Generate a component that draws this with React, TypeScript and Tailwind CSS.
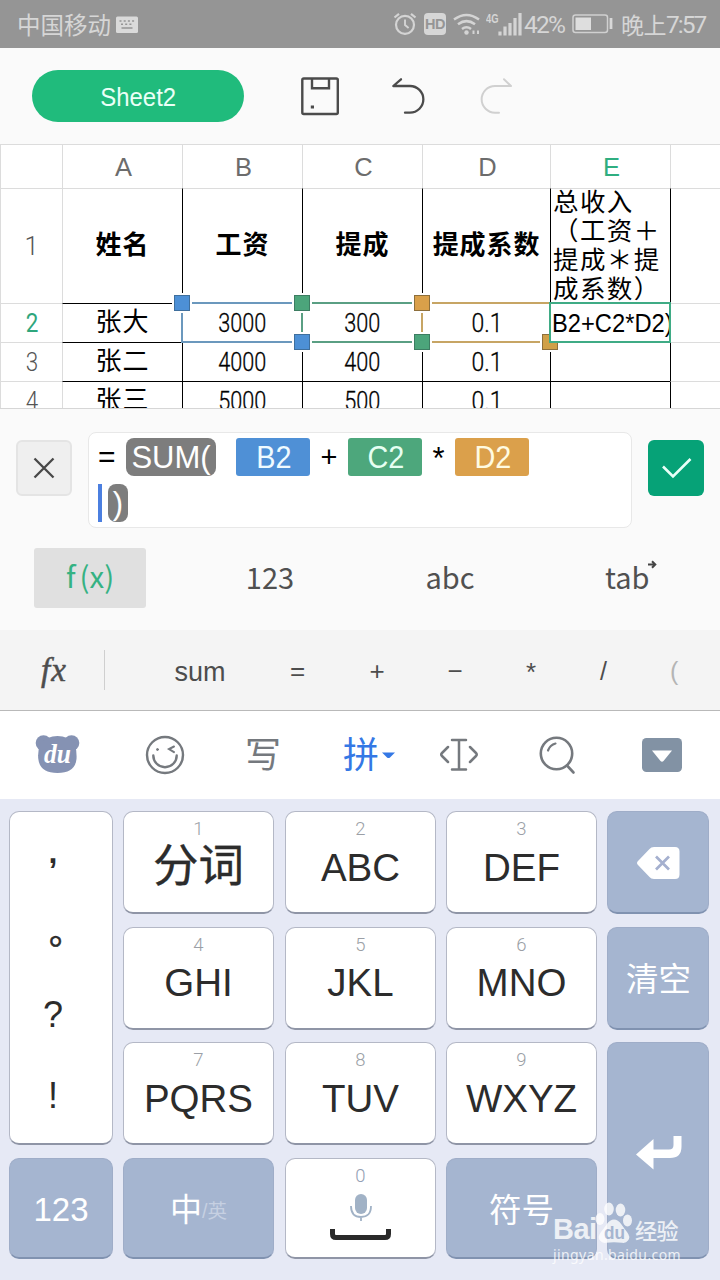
import React from "react";

const SANS = "font-['Liberation_Sans','Noto_Sans_CJK_SC',sans-serif]";
const CJK = "font-['Noto_Sans_CJK_SC',sans-serif]";
const THIN = "font-['Roboto','Liberation_Sans',sans-serif] font-light";

function StatusBar() {
  return (
    <div className="flex h-12 items-center bg-[#959595] pl-[17px] text-[#d6d6d6]">
      <span className={`${CJK} w-[98px] whitespace-nowrap text-[23.5px] leading-[48px]`}>中国移动</span>
      <svg className="mt-[2px]" width="24" height="18" viewBox="0 0 24 18">
        <rect x="1" y="0.5" width="22" height="16.5" rx="1.5" fill="#dadada" />
        <path d="M4.5 5h15M6 8.3h12" stroke="#959595" strokeWidth="1.6" strokeDasharray="2 2.2" />
        <path d="M6.5 12h11" stroke="#959595" strokeWidth="1.5" />
      </svg>
      <svg className="ml-[254px]" width="24" height="24" viewBox="0 0 24 24" fill="none" stroke="#d4d4d4" strokeWidth="2.2">
        <circle cx="12" cy="12.8" r="9" />
        <path d="M12 7.5v5.6l3.6 3" strokeWidth="1.9" />
        <path d="M1.5 5.5 6 1.8M22.5 5.5 18 1.8" />
      </svg>
      <span className="ml-[7px] flex h-[22px] w-[22px] items-center justify-center rounded-[4px] bg-[#d6d6d6] font-['Liberation_Sans',sans-serif] text-[14.5px] leading-none font-bold tracking-[-0.5px] text-[#959595]">
        HD
      </span>
      <svg className="ml-[7px]" width="28" height="24" viewBox="0 0 28 24" fill="none" stroke="#d4d4d4" strokeWidth="2.5">
        <path d="M1 7.500q12.500-9 25 0M5 12.300q8.500-6.300 17 0M9 17q4.500-3.600 9 0" />
        <circle cx="13.500" cy="20.500" r="2.200" fill="#d4d4d4" stroke="none" />
        <path d="M20.500 18.500v3.500M25 18.500v3.500" strokeWidth="2" />
      </svg>
      <svg className="ml-[5px]" width="38" height="26" viewBox="0 0 38 26">
        <text x="0" y="12" fill="#d6d6d6" fontSize="12.500" fontWeight="700" textLength="12.500" lengthAdjust="spacingAndGlyphs" fontFamily="Liberation Sans">4G</text>
        <path d="M14 24.500v-4M19 24.500v-9M24 24.500V12M29 24.500V7M34 24.500V2" stroke="#d4d4d4" strokeWidth="3.200" />
      </svg>
      <span className={`${THIN} w-[46px] pt-[3px] text-[24.5px] leading-none font-normal tracking-[-1.8px] whitespace-nowrap`}>42%</span>
      <svg className="ml-[2px]" width="41" height="20" viewBox="0 0 41 20">
        <rect x="1" y="1" width="34.500" height="17.500" rx="2.500" fill="none" stroke="#d0d0d0" strokeWidth="1.500" />
        <rect x="3.500" y="3.500" width="15.500" height="12.500" fill="#dedede" />
        <path d="M39 4v11" stroke="#d8d8d8" strokeWidth="2.800" />
      </svg>
      <span className="ml-[8px] flex items-center text-[23px] leading-none whitespace-nowrap">
        <span className={`${CJK} tracking-[-0.5px]`}>晚上</span>
        <span className={`${THIN} pt-[3px] text-[24.5px] font-normal tracking-[-2px]`}>7:57</span>
      </span>
    </div>
  );
}

function Toolbar() {
  return (
    <div className="flex h-24 items-center bg-[#fafafa] pl-8">
      <button className={`${SANS} flex h-[52px] w-[212px] items-center justify-center rounded-full bg-[#20bb7c] pt-[2px] text-[26px] leading-none text-[#eafff6]`}>
        <span className="scale-x-[0.92]">Sheet2</span>
      </button>
      <svg className="ml-[56px]" width="40" height="40" viewBox="0 0 40 40" fill="none" stroke="#4b4b4b" strokeWidth="2.400">
        <rect x="2.300" y="2.500" width="35.500" height="35.500" rx="1.500" />
        <path d="M12 2.500v9.800h17V2.500" />
        <rect x="10.800" y="29.500" width="3.200" height="3" fill="#4b4b4b" stroke="none" />
      </svg>
      <svg className="ml-[50px]" width="38" height="40" viewBox="0 0 38 40" fill="none" stroke="#4b4b4b" strokeWidth="2.300" strokeLinecap="round" strokeLinejoin="round">
        <path d="M11 3.300 3.300 10H20a13.300 13.300 0 0 1 0 26.700h-5" />
      </svg>
      <svg className="ml-[50px]" width="38" height="40" viewBox="0 0 38 40" fill="none" stroke="#d0d0d0" strokeWidth="2" strokeLinecap="round" strokeLinejoin="round">
        <path d="M26 3.300 33 10H17a13.300 13.300 0 0 0 0 26.700h4" />
      </svg>
    </div>
  );
}

const COLS = ["A", "B", "C", "D", "E"];
const ROWS = [
  ["2", "张大", "3000", "300", "0.1"],
  ["3", "张二", "4000", "400", "0.1"],
  ["4", "张三", "5000", "500", "0.1"],
];

function Handle({ place, color }: { place: string; color: string }) {
  return (
    <span className={`absolute ${place} flex h-5 w-5 items-center justify-center bg-white`}>
      <span className={`h-4 w-4 border ${color}`} />
    </span>
  );
}

function Sheet() {
  const num = `${THIN} flex items-center justify-center border-t border-l border-black pt-px pr-px text-[25.5px]`;
  return (
    <div className={`${SANS} relative h-[264px] overflow-hidden bg-white text-[25px] text-black`}>
      <div className="grid grid-cols-[62px_120px_120px_120px_128px_120px_50px] grid-rows-[44px_115px_39px_39px_39px] leading-none">
        <div className="border-t border-l border-[#dcdcdc]" />
        {COLS.map((c) => (
          <div key={c} className={`flex items-center justify-center border-t border-l border-[#dcdcdc] pt-[3px] pl-[2px] text-[25.5px] ${c === "E" ? "text-[#2fae80]" : "text-[#6c6c6c]"}`}>
            {c}
          </div>
        ))}
        <div className="border-t border-l border-[#dcdcdc]" />

        <div className={`${THIN} flex items-center justify-center border-t border-l border-[#dcdcdc] pt-[2px] text-[25.5px] text-[#555]`}>1</div>
        {["姓名", "工资", "提成", "提成系数"].map((t, i) => (
          <div key={t} className={`${CJK} flex items-center justify-center border-t border-l border-t-[#dcdcdc] pb-[6px] text-[26px] font-bold tracking-[0.9px] ${i ? "border-l-black" : "border-l-[#dcdcdc]"}`}>
            {t}
          </div>
        ))}
        <div className={`${CJK} border-t border-l border-t-[#dcdcdc] border-l-black`}>
          <div className="-mt-[4px] pl-[2px] text-[25.5px] leading-[29px] tracking-[1.4px] whitespace-nowrap">
            总收入<br />（工资＋<br />提成＊提<br />成系数）
          </div>
        </div>
        <div className="border-t border-l border-t-[#dcdcdc] border-l-black" />

        {ROWS.map((r, ri) => (
          <React.Fragment key={r[0]}>
            <div className={`${THIN} flex items-center justify-center border-t border-l border-[#dcdcdc] pt-[2px] pl-px text-[25.5px] ${ri ? "text-[#555]" : "font-normal text-[#2fa67c]"}`}>
              <span className="scale-x-[0.88]">{r[0]}</span>
            </div>
            <div className={`${CJK} flex items-center justify-center border-t border-l border-t-black border-l-[#dcdcdc] pb-[6px] text-[26px] tracking-[1px]`}>{r[1]}</div>
            <div className={num}><span className="scale-x-[0.85] [-webkit-text-stroke:0.3px_black]">{r[2]}</span></div>
            <div className={num}><span className="scale-x-[0.85] [-webkit-text-stroke:0.3px_black]">{r[3]}</span></div>
            <div className={num}><span className="scale-x-[0.9] pl-[2px] [-webkit-text-stroke:0.3px_black]">{r[4]}</span></div>
            <div className="border-t border-l border-black" />
            <div className="border-t border-l border-t-[#dcdcdc] border-l-black" />
          </React.Fragment>
        ))}
      </div>

      <div className="absolute top-[158px] left-[181px] h-[41px] w-[121px] border-2 border-r-0 border-[#6b98bd]" />
      <div className="absolute top-[158px] left-[301px] h-[41px] w-[121px] border-2 border-r-0 border-[#5a9f83]" />
      <div className="absolute top-[158px] left-[421px] h-[41px] w-[129px] border-2 border-r-0 border-[#c7a564]" />
      <Handle place="top-[149px] left-[172px]" color="border-[#3f6f9d] bg-[#4d90d6]" />
      <Handle place="top-[188px] left-[292px]" color="border-[#3f6f9d] bg-[#4d90d6]" />
      <Handle place="top-[149px] left-[292px]" color="border-[#3d7d62] bg-[#4ca57b]" />
      <Handle place="top-[188px] left-[412px]" color="border-[#3d7d62] bg-[#4ca57b]" />
      <Handle place="top-[149px] left-[412px]" color="border-[#8d6f3c] bg-[#d9a04a]" />
      <Handle place="top-[188px] left-[540px]" color="border-[#8d6f3c] bg-[#d0a048]" />
      <div className="absolute top-[158px] left-[549px] flex h-[41px] w-[122px] items-center overflow-hidden border-2 border-[#3fab85] bg-white pt-[3px] pl-px leading-none whitespace-nowrap">
        <span className="origin-left scale-x-[0.93] text-[25.5px]">B2+C2*D2)</span>
      </div>
    </div>
  );
}

function RefChip({ label, color }: { label: string; color: string }) {
  return (
    <span className={`flex h-[38px] w-[74px] items-center justify-center rounded-[3px] pl-[2px] text-[31px] ${color}`}>
      <span className="scale-x-[0.93]">{label}</span>
    </span>
  );
}

function FormulaEditor() {
  return (
    <div className="h-[222px] border-t border-[#d6d6d6] bg-[#fafafa]">
      <div className="flex gap-4 px-4 pt-[23px]">
        <button className="mt-2 flex h-14 w-14 items-center justify-center rounded-[6px] border-2 border-[#e4e4e4] bg-[#efefef]">
          <svg width="24" height="24" viewBox="0 0 24 24" stroke="#484848" strokeWidth="2.300">
            <path d="M2.500 2.500l19 19M21.500 2.500l-19 19" />
          </svg>
        </button>
        <div className={`${SANS} h-24 w-[544px] rounded-[8px] border border-[#e8e8e8] bg-white pt-[5px] pl-[9px] leading-none`}>
          <div className="flex h-[38px] items-center text-[31px] text-black">
            <span className="w-[28px] text-[30px]">=</span>
            <span className="flex h-[38px] w-[90px] items-center justify-center rounded-[8px] bg-[#7d7d7d] text-white">SUM(</span>
            <span className="w-5" />
            <RefChip label="B2" color="bg-[#4f90d6] text-[#f0fbff]" />
            <span className="w-[38px] text-center text-[29px]">+</span>
            <RefChip label="C2" color="bg-[#4da77c] text-[#e6fff2]" />
            <span className="w-[33px] pt-[3px] text-center text-[31px]">*</span>
            <RefChip label="D2" color="bg-[#dba04b] text-[#fffbe2]" />
          </div>
          <div className="mt-2 flex h-[38px] items-center">
            <span className="h-[38px] w-1 bg-[#4b7fe0]" />
            <span className="ml-[6px] flex h-[38px] w-5 items-center justify-center rounded-[8px] bg-[#7d7d7d] text-[31px] text-white">)</span>
          </div>
        </div>
        <button className="mt-2 flex h-14 w-14 items-center justify-center rounded-[6px] bg-[#06a277]">
          <svg width="32" height="24" viewBox="0 0 32 24" fill="none" stroke="#e9fff8" strokeWidth="2.600">
            <path d="M3 10.500l10 10L30.500 3" />
          </svg>
        </button>
      </div>
      <div className={`${CJK} mt-5 flex h-[60px] items-center pl-[34px] text-[29px] leading-none text-[#505050]`}>
        <span className="flex h-[60px] w-[112px] items-center justify-center rounded-[3px] bg-[#e0e0e0] pb-[4px] text-[29.5px] text-[#35b283]">
          f<span className="pl-[4px]">(x)</span>
        </span>
        <span className="w-[248px] pb-[4px] text-center">123</span>
        <span className="w-[112px] pb-[4px] text-center">abc</span>
        <span className="ml-[99px] flex pb-[4px]">
          tab
          <svg className="-mt-[2px] -ml-[3px]" width="10" height="9" viewBox="0 0 10 9">
            <path d="M1 4.500h7M5 1.200l3.300 3.300L5 7.800" fill="none" stroke="#444" strokeWidth="2" />
          </svg>
        </span>
      </div>
    </div>
  );
}

function FunctionBar() {
  return (
    <div className={`${SANS} flex h-[81px] items-center border-b border-[#b9b9b9] bg-[#f4f4f4] text-[26px] leading-none text-[#4d4d4d]`}>
      <span className="w-[104px] pl-[41px] font-['Liberation_Serif',serif] text-[33px] tracking-[1px] italic [-webkit-text-stroke:0.5px_#4d4d4d]">fx</span>
      <span className="h-10 w-px bg-[#cfcfcf]" />
      <span className="w-[190px] pt-[5px] text-center text-[27px]">sum</span>
      <span className="w-[5px] pt-[2px] text-center"><span className="-mx-2">=</span></span>
      <span className="w-[154px] pt-[2px] text-center">+</span>
      <span className="w-[2px] pt-[2px] text-center"><span className="-mx-2">−</span></span>
      <span className="w-[150px] pt-[3px] text-center">*</span>
      <span className="-ml-[6px] w-[2px] pt-[2px] text-[25px]">/</span>
      <span className="ml-[68px] pt-[2px] text-[25px] text-[#b5b5b5]">(</span>
    </div>
  );
}

function ImeBar() {
  return (
    <div className="flex h-[88px] items-center bg-white pl-[35px]">
      <svg width="46" height="42" viewBox="0 0 46 42" fill="#8592b3">
        <circle cx="8.500" cy="9" r="7.800" />
        <circle cx="36.500" cy="9" r="7.800" />
        <path d="M5 10Q12 2 22.500 2T40 10Q42 18 41.500 25Q40 39 22.500 39T3.300 25Q2.500 17 5 10Z" />
        <text x="9" y="29" fill="#fff" fontSize="27" fontStyle="italic" fontWeight="700" fontFamily="Liberation Serif" textLength="27" lengthAdjust="spacingAndGlyphs">du</text>
      </svg>
      <svg className="ml-[64px]" width="40" height="40" viewBox="0 0 40 40" fill="none" stroke="#75797e" strokeWidth="2.400" strokeLinecap="round">
        <circle cx="20" cy="20" r="18" />
        <path d="M8.300 20.500a11.700 11.700 0 0 0 23.400 0" />
        <circle cx="12.500" cy="14.500" r="1" fill="#75797e" strokeWidth="1" />
        <path d="M29 11.500l-5 2.600 5 3" strokeWidth="2" />
      </svg>
      <span className={`${CJK} ml-[60px] w-[38px] pb-[6px] text-[36px] leading-[82px] text-[#75797e]`}>写</span>
      <span className={`${CJK} ml-[60px] flex items-center pb-[6px] text-[36px] leading-[82px] text-[#3478e5]`}>
        拼
        <svg className="mt-[6px] ml-[3px]" width="13" height="7" viewBox="0 0 13 7" fill="#3478e5">
          <path d="M0 .5h13L8 5.500q-1.500 1-3 0z" />
        </svg>
      </span>
      <svg className="ml-[44px]" width="40" height="36" viewBox="0 0 40 36" fill="none" stroke="#75797e" strokeWidth="2.500" strokeLinecap="round" strokeLinejoin="round">
        <path d="M13 3h14M20 3v29.500M13 32.500h14M9 10l-6 6q-1.500 1.500 0 3l6 6M31 10l6 6q1.500 1.500 0 3l-6 6" />
      </svg>
      <svg className="ml-[60px]" width="38" height="40" viewBox="0 0 38 40" fill="none" stroke="#75797e" strokeWidth="2.600" strokeLinecap="round">
        <circle cx="17.500" cy="18.500" r="15.700" />
        <path d="M28 30.500l6.500 7" />
        <path d="M9 15.500q2-5.500 7.500-7" strokeWidth="2.200" />
      </svg>
      <svg className="ml-[65px]" width="40" height="34" viewBox="0 0 40 34">
        <rect width="40" height="34" rx="4.500" fill="#8292a4" />
        <path d="M10 12.500h20L21.500 23q-1.500 1.500-3 0z" fill="#fff" />
      </svg>
    </div>
  );
}

const LIGHT = "rounded-[10px] border border-b-2 border-[#b4b8c6] border-b-[#8f95a6] bg-white text-[#2c2c2c]";
const DARK = "rounded-[10px] border border-b-2 border-[#9fadc8] border-b-[#8092b0] bg-[#a5b5d0] text-white";

function LetterKey({ n, label }: { n: string; label: string }) {
  const han = n === "1";
  return (
    <div className={`${LIGHT} ${SANS} flex w-[151px] flex-col items-center leading-none`}>
      <span className={`${THIN} pt-[8px] text-[18.5px] text-[#9b9fa6]`}>{n}</span>
      <span className={han ? "pt-[5px] text-[45.5px] [-webkit-text-stroke:0.4px_#2c2c2c]" : "pt-[10px] text-[38.5px]"}>{label}</span>
    </div>
  );
}

function Keyboard() {
  return (
    <div className={`${SANS} relative h-[481px] bg-[#e6e9f5] pt-[12px] pl-[9px]`}>
      <div className="grid grid-cols-[104px_152px_151px_151px_102px] grid-rows-[103px_103px_103px_101px] gap-x-[10px] gap-y-[12.6px]">
        <div className={`${LIGHT} row-span-3 flex flex-col items-center pt-[4px] text-[36px] leading-[80px]`}>
          <span className="-mt-[4px] mb-[4px] h-20 pr-[16px] text-[32px] font-bold">,</span>
          <span className={`${CJK} -mt-[6px] mb-[6px] h-20 pl-[10px] text-[34px] [-webkit-text-stroke:0.6px_#2c2c2c]`}>。</span>
          <span className="-mt-px mb-px h-20 pr-[16px]">?</span>
          <span className="h-20 pr-[16px]">!</span>
        </div>
        <LetterKey n="1" label="分词" />
        <LetterKey n="2" label="ABC" />
        <LetterKey n="3" label="DEF" />
        <div className={`${DARK} flex items-center justify-center pt-[2px]`}>
          <svg width="44" height="34" viewBox="0 0 44 34">
            <path d="M2 15 13.500 3Q15 1 18 1h21q4.500 0 4.500 4.500v23q0 4.500-4.500 4.500H18q-3 0-4.500-2L2 19q-2-2 0-4Z" fill="#fff" />
            <path d="M20 10.500l13 13M33 10.500l-13 13" stroke="#a5b0cf" strokeWidth="2.700" />
          </svg>
        </div>
        <LetterKey n="4" label="GHI" />
        <LetterKey n="5" label="JKL" />
        <LetterKey n="6" label="MNO" />
        <div className={`${DARK} flex items-center justify-center pt-[6px] pl-px text-[32.5px] leading-none`}>清空</div>
        <LetterKey n="7" label="PQRS" />
        <LetterKey n="8" label="TUV" />
        <LetterKey n="9" label="WXYZ" />
        <div className={`${DARK} row-span-2 flex justify-center pt-[92px] pl-[2px]`}>
          <svg width="46" height="36" viewBox="0 0 46 36">
            <path d="M0 19.500 17.500 4v10.500H33q4.500 0 4.500-4.500V1H45.500v10.500q0 11.500-11.500 11.500H17.500v11.500Z" fill="#fff" />
          </svg>
        </div>
        <div className={`${DARK} flex items-center justify-center pt-[4px] text-[33px] leading-none`}>123</div>
        <div className={`${DARK} flex w-[151px] items-center justify-center pt-[4px] text-[32px] leading-none`}>
          中<span className="pt-[4px] text-[19.5px] text-[#c6d0e2]">/英</span>
        </div>
        <div className={`${LIGHT} flex w-[151px] flex-col items-center leading-none`}>
          <span className={`${THIN} pt-[8px] text-[18.5px] text-[#93a0b4]`}>0</span>
          <svg className="mt-[9px]" width="22" height="28" viewBox="0 0 22 28">
            <rect x="5" y="0" width="12" height="20" rx="6" fill="#a1b2c6" />
            <path d="M1 12q0 11 10 11t10-11M11 23v4" fill="none" stroke="#a1b2c6" strokeWidth="1.800" />
          </svg>
          <svg className="mt-[7px]" width="61" height="12" viewBox="0 0 61 12">
            <path d="M2.500 0v5q0 3.500 3.500 3.500h49q3.500 0 3.500-3.500V0" fill="none" stroke="#2a2a2a" strokeWidth="5" />
          </svg>
        </div>
        <div className={`${DARK} flex items-center justify-center pt-[6px] text-[32.5px] leading-none`}>符号</div>
      </div>
      <Watermark />
    </div>
  );
}

function Watermark() {
  return (
    <div className="absolute top-[403px] left-[553px] h-[62px] w-[130px] leading-none text-white opacity-80">
      <div className="flex h-[42px] items-end">
        <span className="w-[42px] text-[29px] font-bold tracking-[-0.5px]">Bai</span>
        <svg width="38" height="42" viewBox="0 0 38 42" fill="#fff">
          <ellipse cx="5" cy="17" rx="4.500" ry="6" />
          <ellipse cx="14" cy="7" rx="4.800" ry="6.500" />
          <ellipse cx="25.500" cy="8" rx="4.800" ry="6.500" />
          <ellipse cx="32.500" cy="18.500" rx="4.500" ry="6" />
          <path d="M19 17.500q4 0 7.500 5t5.500 7.500q4 5 1 8.500-2 3-6 2.300-8-1.300-16 0-4 .7-6-2.300-3-3.500 1-8.500 2-2.500 5.500-7.500t7.500-5Z" />
          <text x="9" y="37" fontSize="19" fontWeight="700" fill="#a5b5d0" fontFamily="Liberation Sans" textLength="21" lengthAdjust="spacingAndGlyphs">du</text>
        </svg>
        <span className="pb-px pl-[2px] text-[22px] font-medium tracking-[-0.6px] whitespace-nowrap">经验</span>
      </div>
      <div className="mt-[2px] font-['Noto_Sans',sans-serif] text-[14px] leading-[18px] tracking-[0.4px]">jingyan.baidu.com</div>
    </div>
  );
}

export default function App() {
  return (
    <div className="h-[1280px] w-[720px] overflow-hidden bg-white">
      <StatusBar />
      <Toolbar />
      <Sheet />
      <FormulaEditor />
      <FunctionBar />
      <ImeBar />
      <Keyboard />
    </div>
  );
}
